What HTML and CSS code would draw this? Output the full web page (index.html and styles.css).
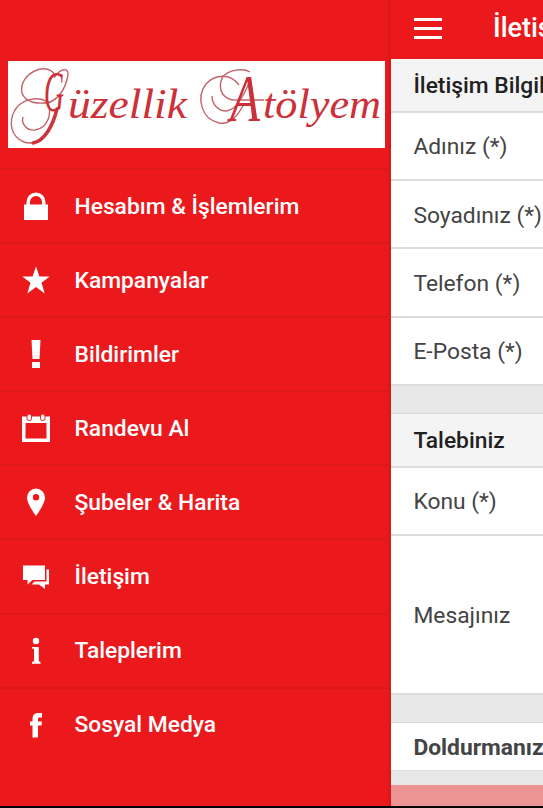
FILE: index.html
```html
<!DOCTYPE html>
<html lang="tr">
	<head>
		<meta charset="UTF-8">
		<title>Güzellik Atölyem</title>
		<link rel="stylesheet" href="styles.css">
	</head>
	<body>
		<div class="app">
			<div class="menu">
				<div class="logo">
					<svg width="377" height="87" viewBox="0 0 377 87">
						<!-- swirls around the capitals -->
						<g class="swirl">
							<path d="M48 15C43 7 35 7 29 9C18 13 12 23 14 32C17 41 29 44 42 41"/>
							<path d="M41 42C30 34 14 38 7 49C0 61 3 76 16 81C31 86 41 70 46 57"/>
							<path d="M39 40C45 52 40 67 27 69C19 70 13 63 15 56"/>
							<path d="M46 17C52 7 61 6 60 14C58 25 53 37 40 42"/>
							<path d="M242 11C236 7 220 8 214 17C209 30 216 40 230 39H256"/>
							<path d="M231 24C222 12 207 13 198 23C188 36 193 58 211 62C223 64 230 54 236 43"/>
							<path d="M204 35C204 43 210 50 218 50C228 49 234 38 242 20"/>
						</g>
						<path class="stroke" d="M49 48C45 64 37 80 25 82"/>
						<text class="letters">
							<tspan class="cap" x="36" y="50" textLength="20" lengthAdjust="spacingAndGlyphs">G</tspan><tspan x="60" y="57" textLength="119" lengthAdjust="spacingAndGlyphs">üzellik</tspan>
							<tspan class="cap-a" x="222" y="60" textLength="30" lengthAdjust="spacingAndGlyphs">A</tspan><tspan x="255" y="57" textLength="118" lengthAdjust="spacingAndGlyphs">tölyem</tspan>
						</text>
					</svg>
				</div>
				<ul class="list">
					<li>
						<svg class="icon" viewBox="0 0 28 28"><path d="M2 12.500h2.500V10a9.500 9.500 0 0 1 19 0v2.500H26V28H2zM8 12.500h12V10a6 6 0 0 0-12 0z"/></svg>
						<span>Hesabım &amp; İşlemlerim</span>
					</li>
					<li>
						<svg class="icon" viewBox="0 0 28 28"><path d="M14 .5l3.400 10h10.300l-8.200 6.300 3.200 10.700-8.700-6.400-8.700 6.400 3.200-10.700L.3 10.500h10.300z"/></svg>
						<span>Kampanyalar</span>
					</li>
					<li>
						<svg class="icon" viewBox="0 0 28 28"><path d="M9.500 0h9l-1 19h-7zM10 22h8v6h-8z"/></svg>
						<span>Bildirimler</span>
					</li>
					<li>
						<svg class="icon" viewBox="0 0 28 28"><path fill-rule="evenodd" d="M0 2.500h28V28H0zM3.500 9v15.500h21V9z"/><rect class="ring" x="5" y="0" width="4.500" height="6.500" rx="2.200"/><rect class="ring" x="18.500" y="0" width="4.500" height="6.500" rx="2.200"/></svg>
						<span>Randevu Al</span>
					</li>
					<li>
						<svg class="icon" viewBox="0 0 28 28"><path fill-rule="evenodd" d="M14 .5a9 9 0 0 1 9 9C23 16 14 28 14 28S5 16 5 9.500a9 9 0 0 1 9-9zM14 6a3.200 3.200 0 1 0 0 6.400A3.200 3.200 0 0 0 14 6z"/></svg>
						<span>Şubeler &amp; Harita</span>
					</li>
					<li>
						<svg class="icon" viewBox="0 0 28 28"><path d="M1 2.500h22v14.500H10.500L5.500 21.500V17H1zM24.500 6.500H27v15h-4v4.500l-6-4.500H9.500l3-3h12z"/></svg>
						<span>İletişim</span>
					</li>
					<li>
						<svg class="icon" viewBox="0 0 28 28"><circle cx="14" cy="4" r="3.200"/><path d="M10 10h6.800v14.300l1.700.700v1.700h-8.500V25l2-.700V12l-2-.500z"/></svg>
						<span>Taleplerim</span>
					</li>
					<li>
						<svg class="icon" viewBox="0 0 28 28"><path d="M10.500 26.500V14.500H8v-4h2.500V8c0-4.300 2.200-6 6.500-6h3v4.500h-2.200c-1.300 0-1.800.500-1.800 1.500v2.500h4l-.500 4H16v12z"/></svg>
						<span>Sosyal Medya</span>
					</li>
				</ul>
			</div>

			<div class="page">
				<div class="bar">
					<div class="burger"><i></i><i></i><i></i></div>
					<h1>İletişim</h1>
				</div>
				<div class="title">İletişim Bilgileri</div>
				<div class="row">Adınız (*)</div>
				<div class="row">Soyadınız (*)</div>
				<div class="row">Telefon (*)</div>
				<div class="row">E-Posta (*)</div>
				<div class="gap"></div>
				<div class="title">Talebiniz</div>
				<div class="row">Konu (*)</div>
				<div class="row message">Mesajınız</div>
				<div class="gap"></div>
				<div class="note">Doldurmanız</div>
				<div class="send"></div>
			</div>
		</div>
	</body>
</html>
```

FILE: styles.css
```css
*{box-sizing: border-box;}
body{margin: 0; background: #000; font-family: Roboto, "Liberation Sans", sans-serif; font-size: 22.8px; overflow: hidden;}
.app{display: flex; width: 543px; height: 808px; padding-bottom: 2px; overflow: hidden;}

.menu{width: 391px; flex: none; background: linear-gradient(to right, #ec191c 386px, #d6171b 391px); padding-top: 61px;}
.logo{width: 377px; height: 87px; margin-left: 8px; background: #fff;}
.logo svg{display: block;}
.swirl{fill: none; stroke: #c4636b; stroke-width: 1.4;}
.stroke{fill: none; stroke: #cd343b; stroke-width: 3.5; stroke-linecap: round;}
.letters{font-family: "Liberation Serif", serif; font-style: italic; font-size: 42px; fill: #cc3038;}
.cap{font-size: 56px;}
.cap-a{font-size: 68px;}
.list{list-style: none; margin: 20px 0 0; padding: 0;}
.list li{display: flex; align-items: center; height: 74.1px; padding: 0 0 0 22px; border-top: 2px solid #dc181b; color: #fff; font-weight: 500;}
.icon{width: 28px; height: 28px; margin-right: 24.5px; fill: #fff;}
.ring{stroke: #ec191c; stroke-width: 1;}

.page{flex: 1; min-width: 0; background: #e8e8e8; color: #444; white-space: nowrap; overflow: hidden;}
.bar{display: flex; height: 59px; padding-left: 23px; background: #ec191c; color: #fff;}
.burger{display: flex; flex-direction: column; gap: 6px; width: 28px; padding-top: 18px; flex: none;}
.burger i{height: 3px; background: #fff;}
.bar h1{margin: 0 0 0 51px; font-size: 27px; font-weight: 500; line-height: 56px;}
.title{height: 53.5px; padding-left: 22.4px; line-height: 53px; background: #f4f4f4; border-bottom: 2px solid #ddd; color: #212121; font-weight: 500;}
.row{display: flex; align-items: center; height: 68.4px; padding: 2px 0 0 22.4px; background: #fff; border-bottom: 2px solid #dcdcdc;}
.message{height: 159px;}
.gap{height: 28px; border-bottom: 1px solid #dcdcdc;}
.note{height: 48px; padding-left: 22.4px; line-height: 49px; background: #fff; border-bottom: 1px solid #dcdcdc; font-weight: 700;}
.send{height: 30px; margin-top: 14px; background: #ec9494;}
```
